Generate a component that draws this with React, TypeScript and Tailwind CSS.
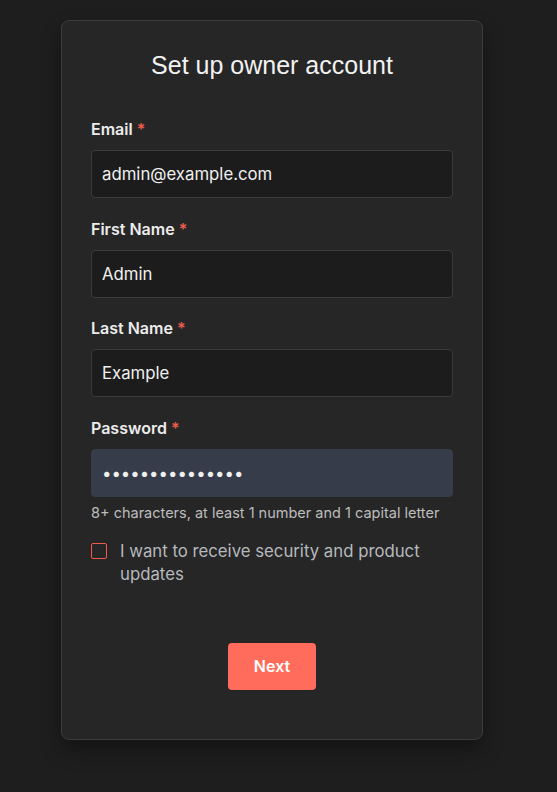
import { useState } from 'react';

function Field({
  label,
  value,
  type = 'text',
  filled = false,
}: {
  label: string;
  value: string;
  type?: string;
  filled?: boolean;
}) {
  return (
    <div className="flex flex-col">
      <label className="h-5 text-[16px] leading-5 font-semibold text-[#ececec]">
        {label} <span className="text-[#ef5b4c]">*</span>
      </label>
      <input
        type={type}
        defaultValue={value}
        className={`mt-[11px] h-12 w-full rounded border px-[10px] text-[16.75px] text-[#f0f0f0] outline-none ${
          filled ? 'border-[#363c4a] bg-[#363c4a]' : 'border-[#3b3b3b] bg-[#1c1c1c]'
        }`}
      />
    </div>
  );
}

export default function App() {
  const [updates, setUpdates] = useState(false);

  return (
    <div
      className="min-h-screen bg-[#1e1e1f] pt-5"
      style={{ fontFamily: 'Inter, "Noto Sans", sans-serif' }}
    >
      <div className="ml-[61px] w-[422px] rounded-lg border border-[#3c3c3c] bg-[#262626] px-[29px] pt-[29px] pb-[49px] shadow-[0_10px_20px_rgba(0,0,0,0.35)]">
        <h1
          className="text-center text-[25px] leading-[30px] font-normal text-[#f2f2f2]"
          style={{ fontFamily: '"Liberation Sans", Arial, sans-serif' }}
        >
          Set up owner account
        </h1>

        <div className="mt-[39px] flex flex-col gap-[20.67px]">
          <Field label="Email" value="admin@example.com" type="email" />
          <Field label="First Name" value="Admin" />
          <Field label="Last Name" value="Example" />
          <div className="flex flex-col">
            <Field label="Password" value="password1234567" type="password" filled />
            <p className="mt-[6px] text-[14.5px] leading-5 text-[#bdbdbd]">
              8+ characters, at least 1 number and 1 capital letter
            </p>
          </div>
        </div>

        <label className="mt-[17px] flex cursor-pointer items-start gap-[13px]">
          <input
            type="checkbox"
            checked={updates}
            onChange={(e) => setUpdates(e.target.checked)}
            className="peer sr-only"
          />
          <span className="mt-[3px] h-4 w-4 shrink-0 rounded-[2px] border border-[#f0594b]" />
          <span className="text-[16.75px] leading-[23px] text-[#b6b9bd]">
            I want to receive security and product updates
          </span>
        </label>

        <div className="mt-[57px] flex justify-center">
          <button
            type="button"
            className="h-[47px] w-[88px] rounded bg-[#ff6c5c] text-base font-semibold text-white"
          >
            Next
          </button>
        </div>
      </div>
    </div>
  );
}
